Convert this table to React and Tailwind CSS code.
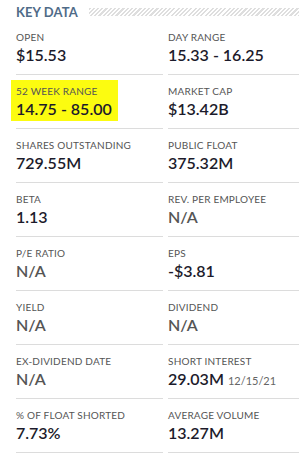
import React from "react";

const rows = [
  [{ l: "OPEN", v: "$15.53" }, { l: "DAY RANGE", v: "15.33 - 16.25" }],
  [{ l: "52 WEEK RANGE", v: "14.75 - 85.00", hl: true }, { l: "MARKET CAP", v: "$13.42B" }],
  [{ l: "SHARES OUTSTANDING", v: "729.55M" }, { l: "PUBLIC FLOAT", v: "375.32M" }],
  [{ l: "BETA", v: "1.13" }, { l: "REV. PER EMPLOYEE", v: "N/A", na: true }],
  [{ l: "P/E RATIO", v: "N/A", na: true }, { l: "EPS", v: "-$3.81" }],
  [{ l: "YIELD", v: "N/A", na: true }, { l: "DIVIDEND", v: "N/A", na: true }],
  [{ l: "EX-DIVIDEND DATE", v: "N/A", na: true }, { l: "SHORT INTEREST", v: "29.03M", sub: "12/15/21" }],
  [{ l: "% OF FLOAT SHORTED", v: "7.73%" }, { l: "AVERAGE VOLUME", v: "13.27M" }],
];

function Cell({ c }) {
  const inner = (
    <>
      <div className="text-[10px] leading-[12px] text-[#555] tracking-[0.2px]">{c.l}</div>
      <div
        className={
          "mt-[2px] text-[16px] leading-[20px] font-semibold whitespace-nowrap " +
          (c.na ? "text-[#555]" : "text-[#1c1b2b]")
        }
      >
        {c.v}
        {c.sub && (
          <span className="ml-[4px] text-[11px] font-normal text-[#666]">{c.sub}</span>
        )}
      </div>
    </>
  );
  return (
    <div className="h-[54px] border-b border-[#dcdcdc] pt-[10px]">
      {c.hl ? (
        <div className="w-fit -ml-[5px] -mt-[5px] bg-[#fcfc10] pl-[5px] pr-[6px] pt-[5px] pb-[2px]">
          {inner}
        </div>
      ) : (
        inner
      )}
    </div>
  );
}

export default function App() {
  return (
    <div
      className="w-[299px] h-[460px] overflow-hidden bg-white pl-[16px]"
      style={{ fontFamily: "Lato, 'Open Sans', sans-serif" }}
    >
      <div className="flex items-center h-[21px] pt-[2px]">
        <div className="text-[13px] leading-[16px] font-bold text-[#4f6b88] tracking-[0.1px]">KEY DATA</div>
        <div className="ml-[11px] flex-1 h-[8px] bg-[repeating-linear-gradient(135deg,#dedede_0px,#dedede_1.5px,transparent_1.5px,transparent_3px)]" />
      </div>
      <div className="grid grid-cols-[147px_131px] gap-x-[5px]">
        {rows.map((r, i) => (
          <React.Fragment key={i}>
            <Cell c={r[0]} />
            <Cell c={r[1]} />
          </React.Fragment>
        ))}
      </div>
    </div>
  );
}
